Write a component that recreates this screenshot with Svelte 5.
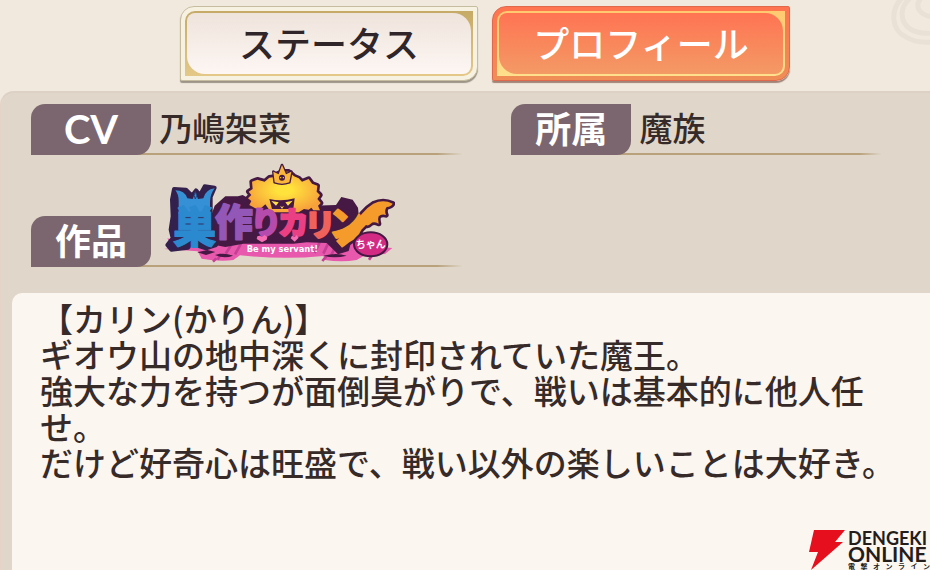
<script>
  const tabs = [
    { id: 'status', label: 'ステータス' },
    { id: 'profile', label: 'プロフィール' }
  ];

  let active = $state('profile');
</script>

<main class="page">
  <svg class="swirl" viewBox="0 0 40 46" aria-hidden="true">
    <path d="M12-2C0 10 1 30 16 37c8 5 16 6 26 5" />
    <path d="M20-2C9 8 10 22 20 29c7 4 14 5 22 4" />
    <path d="M31-2c-6 7-4 16 11 19" />
  </svg>

  <nav class="tabs">
    {#each tabs as tab (tab.id)}
      <button class="tab" class:active={active === tab.id} onclick={() => (active = tab.id)}>
        <span class="frame"><span class="face">{tab.label}</span></span>
      </button>
    {/each}
  </nav>

  <section class="panel">
    <dl class="fields">
      <div class="field">
        <dt class="latin">CV</dt>
        <dd>乃嶋架菜</dd>
      </div>
      <div class="field">
        <dt>所属</dt>
        <dd>魔族</dd>
      </div>
      <div class="field">
        <dt>作品</dt>
        <dd>
          <svg class="title-logo" viewBox="9 12 696 300" role="img" aria-label="巣作りカリンちゃん">
            <defs>
              <radialGradient id="fur" cx="0.5" cy="0.45" r="0.55">
                <stop offset="0.2" stop-color="#ffe23c" />
                <stop offset="1" stop-color="#f7a13b" />
              </radialGradient>
            </defs>
            <!-- ribbon -->
            <path class="ribbon" d="M12 270l25-4-15-28 50 14h80l50-4 60-4q110 12 220-4l80 6 100 18 35 3-22 18-60 4-25 14q-45 8-95 0l-5-12q-120 12-250-2l-20 14q-40 6-95-4l-12-22-65-5z" />
            <path class="ribbon-lines" d="M215 256l-18 28m46-30l-18 32m255-38l-16 34m42-32l-16 34m42-34l-18 38m-345 10l-10 10m340-16l-12 14m150-18l-10 14M45 258l-12 12m150 14l-10 18" />
            <path class="ink" d="M112 280l30-7 24 6-28 9zM165 288q26-8 54 2-26 10-54-2zM490 290q40-10 70 0-36 10-70 0z" />
            <!-- lettering backdrop -->
            <path class="ink" d="M164 140l32-28 38 0 14-4 28 16 10 14 170 2 72-2 16-24 34 8 16 24 2 20-30 110-32 10-34-34-60-2-40 4h-150l-54 10-50-10-14-24z" />
            <!-- golden beast -->
            <path class="fur" d="M268 138l6-12-10-8 10-10-8-10 12-8-2-22 16-6 22 6 14-12 16-2 10-10 14-6 18 0 16 14 14 6 10 10 20-8 10 14 16 6-2 18 10 10-8 12 10 12-8 8 6 14-20 0-6-8-8 6-14-2-16 10-74 0-16-10-10-14-16 14-14-2z" />
            <path class="crown" d="M344 70l-4-32 16 8 10-28 12 28 16-8-6 32q-22 8-44 0z" />
            <circle class="ink" cx="366" cy="56" r="9" />
            <circle class="spark" cx="362" cy="56" r="2" />
            <circle class="spark" cx="370" cy="56" r="2" />
            <path class="ink" d="M328 120q38 8 76-2l-4 32h-64z" />
            <path class="spark" d="M334 126l22 4-8 10zM376 130l22-5-14 15zM360 140l6 4 6-4-6 10z" />
            <!-- blue imp -->
            <path class="imp-shadow" d="M42 90l36 2 18 18 12-16 12 14 14-26 30 4-12 28 0 50 8 20-4 26-4 20 16 28-30 10-26-8-12-14-16 20-50 6-12-14 16-20-6-26 6-40-2-50z" />
            <path class="imp" d="M46 94q28 0 36 24l16 2 8-20 8 20 16-2q6-26 34-30-14 18-14 42v36H56v-40q0-20-10-32z" />
            <path class="imp-mark" d="M106 98q-7 12 0 22 8-10 0-22" />
            <text class="letter l1" x="39" y="253">巣</text>
            <text class="letter l2" x="166" y="232">作</text>
            <text class="letter l3" x="272" y="224">り</text>
            <text class="letter l4" x="354" y="226">カ</text>
            <text class="letter l5" x="434" y="230">リ</text>
            <!-- wing -->
            <path class="wing" d="M528 246l34-30 44-52q14-18 34-30 30-14 58 0-4 8-18 10-8 10-2 24-14-4-22 4-4 8 0 22-16-8-24 0-8 8-14 4l-14 14q-10 24-36 38-14 12-22 16z" />
            <text class="letter l6" x="508" y="232">ン</text>
            <ellipse class="badge" cx="632" cy="256" rx="50" ry="36" />
            <text class="chan" x="632" y="267">ちゃん</text>
            <path class="heart" d="M306 250l-16-10 2-8 8-2 6 4 8-6 8 6-2 8zM404 248l-12-10 4-8 8 4 6-6 6 8z" />
            <text class="servant" x="260" y="279">Be my servant!</text>
          </svg>
        </dd>
      </div>
    </dl>

    <article class="paper">
      <p>【カリン(かりん)】</p>
      <p>ギオウ山の地中深くに封印されていた魔王。</p>
      <p>強大な力を持つが面倒臭がりで、戦いは基本的に他人任せ。</p>
      <p>だけど好奇心は旺盛で、戦い以外の楽しいことは大好き。</p>
    </article>
  </section>

  <div class="watermark">
    <svg class="bolt" viewBox="0 0 36 40" aria-hidden="true">
      <path d="M5 0H36L26 12H34L2 40 9 22H0z" />
    </svg>
    <div class="brand">
      <span>DENGEKI</span>
      <span class="online">ONLINE</span>
      <small>電撃オンライン</small>
    </div>
  </div>
</main>

<style>
  :global(body) {
    margin: 0;
  }

  .page {
    position: relative;
    display: flex;
    flex-direction: column;
    box-sizing: border-box;
    min-height: 100vh;
    overflow: hidden;
    background: #f1e9de;
    color: #362b29;
    font-family: 'Noto Sans CJK JP', sans-serif;
    font-weight: 500;
  }

  .swirl {
    position: absolute;
    top: 0;
    right: 0;
    width: 40px;
    fill: none;
    stroke: #e9e1d5;
    stroke-width: 5;
  }

  .tabs {
    display: flex;
    justify-content: center;
    gap: 14px;
    padding: 6px 0 10px 40px;
  }

  .tab {
    display: flex;
    box-sizing: border-box;
    width: 298px;
    height: 75px;
    padding: 4px;
    border: 1px solid #c6bda0;
    border-radius: 14px 2px 14px 2px;
    background: #f7f1e2;
    box-shadow: 0 2px 1px #9c9486;
    color: #30262a;
    font: inherit;
    font-size: 36px;
    cursor: pointer;
  }

  .frame {
    display: flex;
    flex: 1;
    padding: 2px;
    border-radius: 10px 0 10px 0;
    background: linear-gradient(#c5aa68, #e3c888);
  }

  .face {
    display: flex;
    flex: 1;
    align-items: center;
    justify-content: center;
    padding-bottom: 4px;
    border-radius: 8px 18px 8px 18px;
    background: linear-gradient(#efe4dc, #fdf6f3);
    line-height: 36px;
  }

  .active {
    border-color: #e0694d;
    background: linear-gradient(#ff7450, #ef8e56);
    box-shadow: 0 2px 1px #a18476;
    color: #fff;
  }

  .active .frame {
    background: linear-gradient(#ffc970, #ffe08c);
  }

  .active .face {
    background: linear-gradient(#ff7453, #f39a65);
  }

  .panel {
    display: flex;
    flex: 1;
    flex-direction: column;
    border-top: 2px solid #ddd1c6;
    border-left: 1px solid #e5d3c8;
    border-radius: 14px 0 0 0;
    background: #e0d7ca;
  }

  .fields {
    display: grid;
    grid-template-columns: 7fr 6fr;
    column-gap: 48px;
    margin: 0;
    padding: 11px 48px 26px 30px;
  }

  .field {
    display: flex;
    align-items: flex-end;
    gap: 8px;
    background: linear-gradient(90deg, #b9a27b 94%, transparent) bottom / 100% 2px no-repeat;
  }

  dt {
    width: 120px;
    height: 51px;
    border-radius: 14px 0 14px 0;
    background: #7b6670;
    color: #fff;
    font-size: 36px;
    font-weight: 700;
    line-height: 47px;
    text-align: center;
  }

  dt.latin {
    font-family: Lato, 'Noto Sans', sans-serif;
    font-size: 40px;
    line-height: 50px;
  }

  dd {
    margin: 0;
    padding-bottom: 4px;
    font-size: 33px;
    line-height: 47px;
  }

  .title-logo {
    display: block;
    width: 232px;
    margin: 8px 0 0 4px;
  }

  .ribbon {
    fill: #e858ac;
  }

  .ribbon-lines {
    fill: none;
    stroke: #c53f97;
    stroke-width: 8;
  }

  .ink {
    fill: #451943;
  }

  .fur {
    fill: url(#fur);
    stroke: #451943;
    stroke-width: 16;
    stroke-linejoin: round;
    paint-order: stroke;
  }

  .crown {
    fill: #f9b63a;
    stroke: #451943;
    stroke-width: 8;
    stroke-linejoin: round;
    paint-order: stroke;
  }

  .spark {
    fill: #ffe04a;
  }

  .imp-shadow {
    fill: #33204d;
    stroke: #33204d;
    stroke-width: 12;
    stroke-linejoin: round;
  }

  .imp {
    fill: #3590d6;
  }

  .imp-mark {
    fill: #3590d6;
    stroke: #22427c;
    stroke-width: 3;
  }

  .letter {
    font-size: 92px;
    font-weight: 900;
    stroke-width: 6;
    stroke-linejoin: round;
  }

  .l1 {
    fill: #2b89d0;
    stroke: #2b89d0;
    stroke-width: 3;
    font-size: 130px;
  }

  .l2 {
    fill: #9257b7;
    stroke: #9257b7;
    font-size: 112px;
  }

  .l3 {
    fill: #b64bae;
    stroke: #b64bae;
  }

  .l4 {
    fill: #ea3f83;
    stroke: #ea3f83;
  }

  .l5 {
    fill: #ef625c;
    stroke: #ef625c;
  }

  .l6 {
    fill: #f59b2b;
    stroke: #f59b2b;
    font-size: 104px;
  }

  .wing {
    fill: #f59b2b;
    stroke: #451943;
    stroke-width: 16;
    stroke-linejoin: round;
    paint-order: stroke;
  }

  .badge {
    fill: #d32b83;
    stroke: #451943;
    stroke-width: 6;
  }

  .chan {
    fill: #fff;
    font-size: 30px;
    font-weight: 700;
    text-anchor: middle;
  }

  .heart {
    fill: #f66db3;
  }

  .servant {
    fill: #fff;
    font-family: 'DejaVu Sans', sans-serif;
    font-size: 25px;
    font-weight: 700;
  }

  .paper {
    flex: 1;
    margin-left: 11px;
    padding: 7px 24px 24px 28px;
    border-radius: 10px 0 0 0;
    background: #fcf6f1;
    font-size: 33px;
    line-height: 36px;
  }

  .paper p {
    margin: 0;
  }

  .watermark {
    position: absolute;
    right: 0;
    bottom: 0;
    display: flex;
    gap: 3px;
    color: #231d1c;
  }

  .bolt {
    width: 36px;
    height: 40px;
    fill: #e60f1e;
  }

  .brand {
    display: flex;
    flex-direction: column;
    width: 82px;
    font-family: Lato, sans-serif;
    font-size: 18px;
    font-weight: 700;
    line-height: 16px;
  }

  .online {
    font-size: 21px;
  }

  .brand small {
    font-family: 'Noto Sans CJK JP', sans-serif;
    font-size: 7px;
    line-height: 8px;
    text-align: justify;
    text-align-last: justify;
    text-justify: inter-character;
  }
</style>
